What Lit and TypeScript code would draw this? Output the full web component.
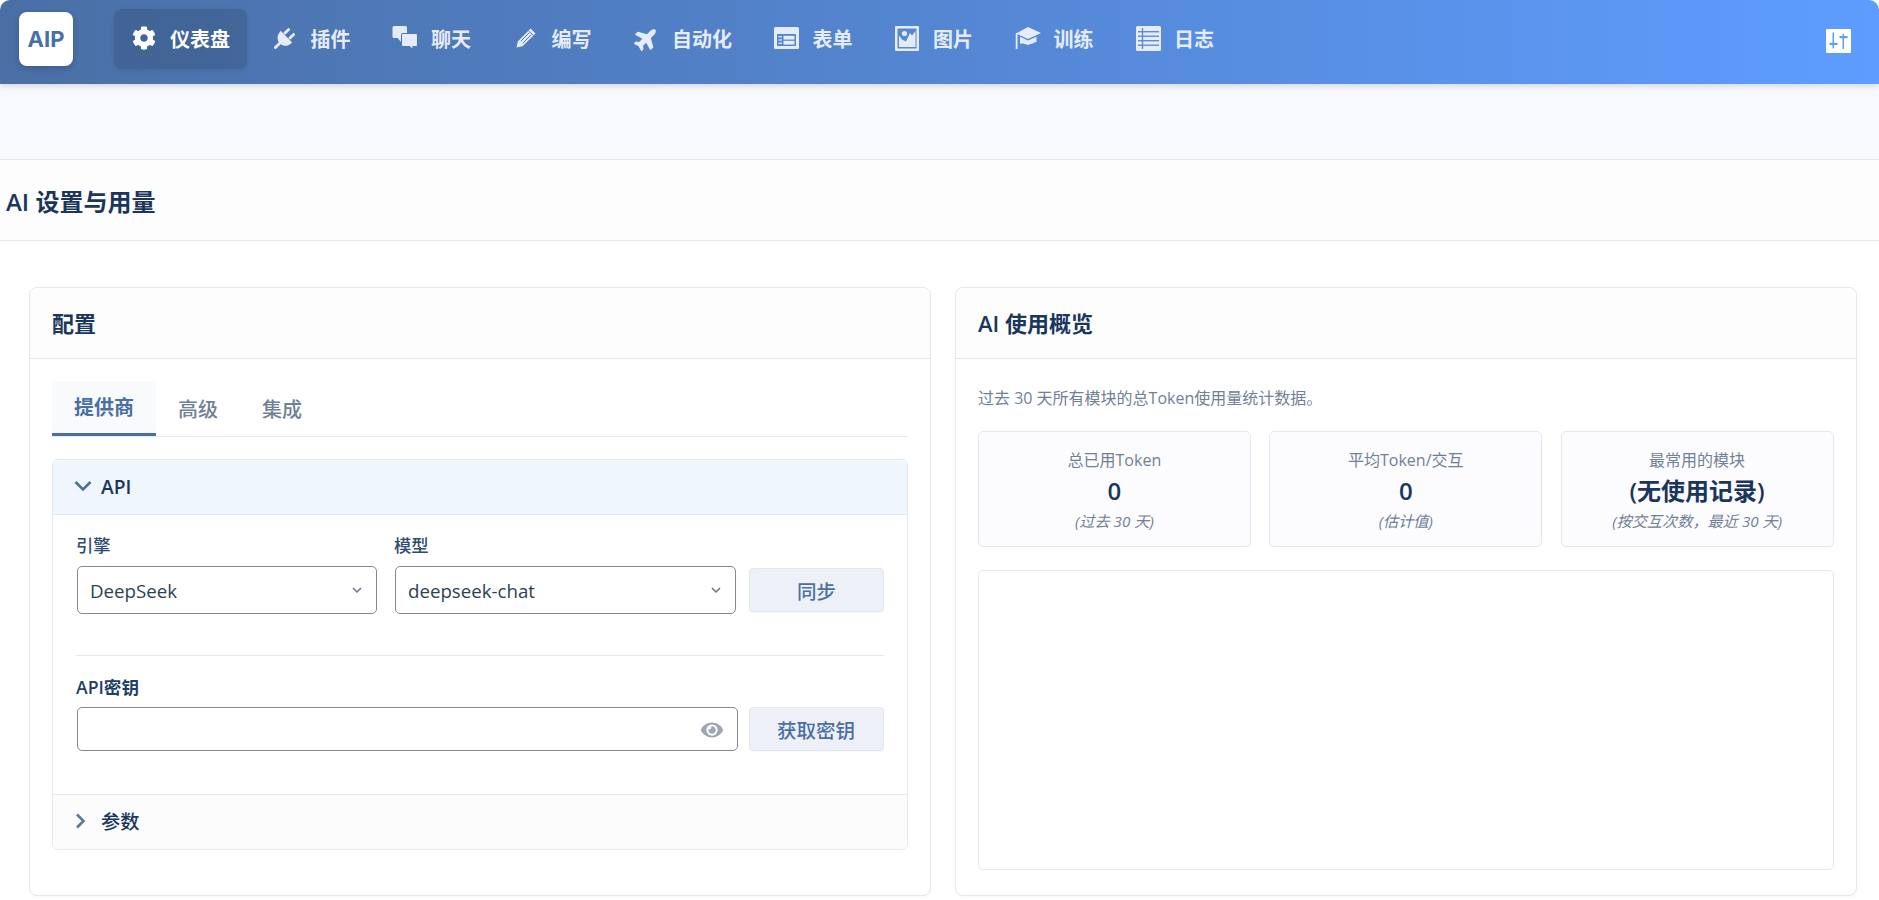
import { LitElement, html, css } from "lit";
import { customElement } from "lit/decorators.js";

const ICONS: Record<string, unknown> = {
  gear: html`<svg width="24" height="24" viewBox="0 0 512 512" fill="currentColor"><path d="M487.4 315.7l-42.6-24.6c4.3-23.2 4.3-47 0-70.2l42.6-24.6c4.9-2.8 7.1-8.6 5.5-14-11.1-35.6-30-67.8-54.7-94.6-3.8-4.1-10-5.1-14.8-2.3L380.8 110c-17.9-15.4-38.5-27.3-60.8-35.1V25.8c0-5.6-3.9-10.5-9.4-11.7-36.7-8.2-74.3-7.8-109.2 0-5.5 1.2-9.4 6.1-9.4 11.7V75c-22.2 7.9-42.8 19.8-60.8 35.1L88.7 85.5c-4.9-2.8-11-1.9-14.8 2.3-24.7 26.7-43.6 58.9-54.7 94.6-1.7 5.4.6 11.2 5.5 14L67.3 221c-4.3 23.2-4.3 47 0 70.2l-42.6 24.6c-4.9 2.8-7.1 8.6-5.5 14 11.1 35.6 30 67.8 54.7 94.6 3.8 4.1 10 5.1 14.8 2.3l42.6-24.6c17.9 15.4 38.5 27.3 60.8 35.1v49.2c0 5.6 3.9 10.5 9.4 11.7 36.7 8.2 74.3 7.8 109.2 0 5.5-1.2 9.4-6.1 9.4-11.7v-49.2c22.2-7.9 42.8-19.8 60.8-35.1l42.6 24.6c4.9 2.8 11 1.9 14.8-2.3 24.7-26.7 43.6-58.9 54.7-94.6 1.5-5.5-.7-11.3-5.6-14.1zM256 336c-44.1 0-80-35.9-80-80s35.9-80 80-80 80 35.9 80 80-35.9 80-80 80z"/></svg>`,
  plug: html`<svg width="22" height="22" viewBox="0 0 22 22" fill="currentColor"><path d="M6.6 3.8 18.2 15.400 16.400 17C13.500 19.500 9 19.500 6 16.500 3 13.500 2.800 9.300 5.200 6Z"/><path d="M11 6l3.600-3.600M16 11l3.600-3.600M1.400 20.600 6 16" fill="none" stroke="currentColor" stroke-width="2.800" stroke-linecap="round"/></svg>`,
  comments: html`<svg width="26" height="24" viewBox="0 0 26 24" fill="currentColor"><path d="M2 0h11.500a1.500 1.500 0 0 1 1.500 1.500v9a1.500 1.500 0 0 1-1.500 1.500H9.500v4.500L5.500 12H2a1.500 1.500 0 0 1-1.500-1.500v-9A1.500 1.500 0 0 1 2 0z"/><path d="M11.500 7.500h12.500a1.500 1.500 0 0 1 1.500 1.500v10a1.500 1.500 0 0 1-1.500 1.500h-3v3.500l-3.500-3.500h-6.500a1.500 1.500 0 0 1-1.500-1.500V9a1.500 1.500 0 0 1 1.500-1.500z" stroke="#5079ba" stroke-width="1.100"/></svg>`,
  pencil: html`<svg width="20" height="20" viewBox="0 0 20 20" fill="currentColor"><path d="M14.500.5 19.500 5.500 6.500 18.200.5 19.500 1.800 13.500Z"/><path d="M4.800 13.200 13.400 4.600M6.800 15.200 15.400 6.600" fill="none" stroke="#5079ba" stroke-width="1"/><path d="M12.400 2.600l5 5" fill="none" stroke="#5079ba" stroke-width="1"/></svg>`,
  plane: html`<svg width="25" height="25" viewBox="0 0 576 576" fill="currentColor"><g transform="rotate(-45 288 288) translate(0 32)"><path d="M480 192H365.710L260.610 8.060A16.014 16.014 0 0 0 246.710 0h-65.500c-10.630 0-18.300 10.170-15.380 20.390L214.860 192H112l-43.200-57.600c-3.020-4.030-7.770-6.400-12.800-6.400H16.010C5.600 128-2.040 137.780.490 147.880L32 256 .490 364.120C-2.040 374.220 5.600 384 16.010 384H56c5.040 0 9.780-2.370 12.800-6.400L112 320h102.860l-49.030 171.600c-2.920 10.220 4.750 20.400 15.380 20.400h65.500c5.740 0 11.040-3.080 13.890-8.060L365.710 320H480c35.350 0 96-28.650 96-64s-60.650-64-96-64z"/></g></svg>`,
  form: html`<svg width="25" height="22" viewBox="0 0 25 22"><rect width="25" height="22" rx="1.500" fill="currentColor"/><rect x="3" y="7" width="19" height="12" fill="#5485d0"/><g fill="currentColor"><rect x="4.500" y="9" width="3.500" height="1.300"/><rect x="4.500" y="12.300" width="3.500" height="1.300"/><rect x="4.500" y="15.600" width="3.500" height="1.300"/><rect x="9.500" y="8.800" width="11" height="3.800"/><rect x="9.500" y="13.800" width="11" height="3.800"/></g></svg>`,
  image: html`<svg width="24" height="25" viewBox="0 0 24 25"><rect width="24" height="25" rx="1" fill="currentColor"/><rect x="2.500" y="2.500" width="19" height="20" fill="#5688d4"/><path d="M4 21V9.500l3 4 4 2 4-8.500 2 2.500 3.500-4.500V21z" fill="currentColor"/><circle cx="9.500" cy="7.500" r="2.600" fill="currentColor"/></svg>`,
  cap: html`<svg width="26" height="22" viewBox="0 0 26 22" fill="currentColor"><path d="M13 0 26 6 13 12 .8 6.500Z"/><path d="M5 9.800 13 13.600 21.500 9.800V14.800C18 16.500 15.500 17.200 13 18 10.500 16.800 8 16.200 5 16.500Z"/><path d="M.7 6.500h1.800V22H.7z"/></svg>`,
  list: html`<svg width="25" height="25" viewBox="0 0 25 25"><rect width="25" height="25" rx="1.500" fill="currentColor"/><g fill="#5a8cd8"><rect x="2" y="5" width="21" height="1.400"/><rect x="2" y="9.500" width="21" height="1.400"/><rect x="2" y="14" width="21" height="1.400"/><rect x="2" y="18.500" width="21" height="1.400"/><rect x="5.800" y="2" width="1.400" height="21"/></g></svg>`,
};

const NAV = [
  ["gear", "仪表盘"],
  ["plug", "插件"],
  ["comments", "聊天"],
  ["pencil", "编写"],
  ["plane", "自动化"],
  ["form", "表单"],
  ["image", "图片"],
  ["cap", "训练"],
  ["list", "日志"],
];

const STATS = [
  ["总已用Token", "0", "(过去 30 天)"],
  ["平均Token/交互", "0", "(估计值)"],
  ["最常用的模块", "(无使用记录)", "(按交互次数，最近 30 天)"],
];

const chevronSmall = html`<svg class="sel-chev" width="10" height="7" viewBox="0 0 10 7" fill="none" stroke="#6b7280" stroke-width="1.500"><path d="M1 1l4 4 4-4"/></svg>`;

@customElement("app-root")
export class AppRoot extends LitElement {
  static styles = css`
    :host {
      display: block;
      height: 900px;
      overflow: hidden;
      background: #fff;
      font-family: "Open Sans", "Noto Sans CJK SC", sans-serif;
      color: #1a365d;
    }
    .win { height: 900px; border-radius: 10px; overflow: hidden; background: #fff; }
    .top {
      height: 84px;
      box-sizing: border-box;
      display: flex;
      align-items: flex-start;
      padding: 9px 28px 0 19px;
      background: linear-gradient(90deg, #4a6fa5, #5e9dff);
      box-shadow: 0 2px 6px rgba(0, 0, 0, 0.15);
      position: relative;
    }
    .logo {
      width: 54px;
      height: 54px;
      margin-top: 3px;
      margin-right: 41px;
      border-radius: 8px;
      background: #fff;
      color: #4a6fa5;
      display: flex;
      align-items: center;
      justify-content: center;
      font-family: Inter, sans-serif;
      font-size: 22px;
      font-weight: 700;
      box-shadow: 0 2px 6px rgba(0, 0, 0, 0.2);
    }
    nav { display: flex; flex: 1; gap: 7.500px; }
    .item {
      height: 60px;
      display: flex;
      align-items: center;
      gap: 12px;
      padding: 0 17px 2px 16px;
      border-radius: 8px;
      box-sizing: border-box;
      color: #e6ecf7;
      font-size: 20px;
      font-weight: 600;
    }
    .item.on {
      background: rgba(0, 0, 0, 0.12);
      color: #fff;
      box-shadow: 0 1px 4px rgba(0, 0, 0, 0.1);
    }
    .ico { width: 28px; display: flex; justify-content: center; }
    .sliders { margin-top: 20px; width: 25px; height: 24px; display: block; }

    .strip { height: 75px; background: #f8f9fc; }
    .head {
      height: 82px;
      box-sizing: border-box;
      padding: 0 6px;
      display: flex;
      align-items: center;
      background: #fdfdfe;
      border-top: 1px solid #e2e8f0;
      border-bottom: 1px solid #e2e8f0;
      font-size: 24px;
      font-weight: 600;
      color: #1a365d;
    }
    .grid {
      display: grid;
      grid-template-columns: 1fr 1fr;
      gap: 24.500px;
      padding: 46px 22.500px 0 29px;
    }
    .card {
      height: 609px;
      box-sizing: border-box;
      border: 1px solid #e2e8f0;
      border-radius: 8px;
      background: #fff;
      overflow: hidden;
      box-shadow: 0 1px 3px rgba(0, 0, 0, 0.03);
    }
    .card-head {
      height: 71px;
      box-sizing: border-box;
      padding: 0 22px 3px;
      display: flex;
      align-items: center;
      background: #fdfdfe;
      border-bottom: 1px solid #e2e8f0;
      font-size: 22px;
      font-weight: 600;
    }
    .card-body { padding: 22px; }

    .tabs { display: flex; height: 56px; box-sizing: border-box; border-bottom: 1px solid #e2e8f0; margin: 0 0 22px; }
    .tab {
      height: 55px;
      box-sizing: border-box;
      padding: 0 22px 1px;
      display: flex;
      align-items: center;
      font-size: 20px;
      font-weight: 500;
      color: #718096;
    }
    .tab.on { font-weight: 600; color: #4a6fa5; background: #f9fafc; border-bottom: 3px solid #4a6fa5; }

    .acc { border: 1px solid #e2e8f0; border-radius: 6px; overflow: hidden; }
    .acc-head {
      height: 55px;
      box-sizing: border-box;
      display: flex;
      align-items: center;
      padding: 0 0 2px 21px;
      gap: 9px;
      font-size: 19.200px;
      font-weight: 600;
      background: #f0f6fe;
      border-bottom: 1px solid #e2e8f0;
    }
    .acc-head svg { width: 18px; flex: none; }
    .acc-head.closed { background: #fcfcfd; border-bottom: 0; border-top: 1px solid #e2e8f0; font-weight: 500; }
    .acc-body { padding: 21px 23px 0; height: 279px; box-sizing: border-box; }
    label { display: block; height: 20px; line-height: 20px; margin-bottom: 10px; font-size: 17.300px; font-weight: 500; color: #2d4a6f; }
    label.strong { font-size: 17.600px; font-weight: 600; color: #1f3f68; }
    .row1 { display: grid; grid-template-columns: 301px 342px 135px; column-gap: 17px; }
    .row1 .btn-cell { display: flex; align-items: flex-end; padding-bottom: 2px; margin-left: -4px; }
    .select {
      height: 48px;
      margin-left: 1px;
      box-sizing: border-box;
      border: 1px solid #85888f;
      border-radius: 5px;
      padding: 0 12px;
      display: flex;
      align-items: center;
      justify-content: space-between;
      font-size: 18.700px;
      color: #2d3f55;
      background: #fff;
    }
    .sel-chev { flex: none; margin-right: 2px; }
    .btn {
      width: 135px;
      height: 44px;
      box-sizing: border-box;
      border: 1px solid #e2e8f0;
      border-radius: 4px;
      background: #edf1f7;
      color: #4a6fa5;
      font-size: 19.500px;
      font-weight: 500;
      font-family: inherit;
      display: flex;
      align-items: center;
      justify-content: center;
      box-shadow: 0 1px 2px rgba(0, 0, 0, 0.04);
    }
    .rule { height: 1px; background: #e2e8f0; margin: 41px 0 21px; }
    .row2 { display: flex; gap: 10.500px; align-items: stretch; }
    .input {
      flex: 1;
      margin-left: 1px;
      height: 44px;
      box-sizing: border-box;
      border: 1px solid #85888f;
      border-radius: 5px;
      position: relative;
    }
    .eye { position: absolute; right: 13px; top: 12px; }

    .desc { font-size: 16px; color: #718096; line-height: 24px; margin: 5px 0 21px; }
    .stats { display: grid; grid-template-columns: repeat(3, 1fr); gap: 18.600px; }
    .stat {
      height: 116px;
      box-sizing: border-box;
      border: 1px solid #e2e8f0;
      border-radius: 5px;
      background: #fcfcfe;
      text-align: center;
      padding-top: 17px;
      box-shadow: 0 1px 2px rgba(0, 0, 0, 0.02);
    }
    .s-label { font-size: 16px; line-height: 22px; color: #718096; }
    .s-value { font-size: 24px; font-weight: 600; line-height: 34px; margin-top: 3px; color: #1a365d; }
    .s-sub { font-size: 15.200px; line-height: 20px; font-style: italic; color: #718096; margin-top: 3px; }
    .chart { height: 300px; box-sizing: border-box; margin-top: 22.500px; border: 1px solid #e2e8f0; border-radius: 5px; background: #fff; }
  `;

  render() {
    return html`<div class="win">
      <header class="top">
        <div class="logo">AIP</div>
        <nav>
          ${NAV.map(
            ([ic, t], i) => html`<div class="item ${i === 0 ? "on" : ""}">
              <span class="ico">${ICONS[ic]}</span><span>${t}</span>
            </div>`
          )}
        </nav>
        <svg class="sliders" viewBox="0 0 25 24">
          <rect width="25" height="24" rx="1" fill="#fff"/>
          <g fill="#5e9dff">
            <rect x="6.500" y="3.500" width="1.500" height="16"/>
            <rect x="3.500" y="13.800" width="8" height="2.200"/>
            <rect x="16.500" y="5" width="1.500" height="15"/>
            <rect x="13.500" y="7" width="8" height="2.200"/>
          </g>
        </svg>
      </header>
      <div class="strip"></div>
      <div class="head">AI 设置与用量</div>
      <div class="grid">
        <section class="card">
          <div class="card-head">配置</div>
          <div class="card-body">
            <div class="tabs">
              <div class="tab on">提供商</div>
              <div class="tab">高级</div>
              <div class="tab">集成</div>
            </div>
            <div class="acc">
              <div class="acc-head">
                <svg width="18" height="12" viewBox="0 0 18 12" fill="none" stroke="#4a6fa5" stroke-width="2.600"><path d="M1.500 2l7.500 7.500L16.500 2"/></svg>
                API
              </div>
              <div class="acc-body">
                <div class="row1">
                  <div>
                    <label>引擎</label>
                    <div class="select">DeepSeek ${chevronSmall}</div>
                  </div>
                  <div>
                    <label>模型</label>
                    <div class="select">deepseek-chat ${chevronSmall}</div>
                  </div>
                  <div class="btn-cell"><div class="btn">同步</div></div>
                </div>
                <div class="rule"></div>
                <label class="strong">API密钥</label>
                <div class="row2">
                  <div class="input">
                    <svg class="eye" width="24" height="20" viewBox="0 0 576 512" fill="#a0a5b5"><path d="M572.520 241.400C518.290 135.590 410.930 64 288 64S57.680 135.640 3.480 241.410a32.350 32.350 0 0 0 0 29.190C57.710 376.410 165.070 448 288 448s230.320-71.640 284.520-177.410a32.350 32.350 0 0 0 0-29.190zM288 400a144 144 0 1 1 144-144 143.930 143.930 0 0 1-144 144zm0-240a95.310 95.310 0 0 0-25.310 3.790 47.850 47.850 0 0 1-66.900 66.900A95.780 95.780 0 1 0 288 160z"/></svg>
                  </div>
                  <div class="btn">获取密钥</div>
                </div>
              </div>
              <div class="acc-head closed">
                <svg width="18" height="16" viewBox="0 0 18 16" fill="none" stroke="#5f7898" stroke-width="2.600"><path d="M3 1.500l6.500 6.500L3 14.500"/></svg>
                参数
              </div>
            </div>
          </div>
        </section>
        <section class="card">
          <div class="card-head">AI 使用概览</div>
          <div class="card-body">
            <div class="desc">过去 30 天所有模块的总Token使用量统计数据。</div>
            <div class="stats">
              ${STATS.map(
                ([l, v, s]) => html`<div class="stat">
                  <div class="s-label">${l}</div>
                  <div class="s-value">${v}</div>
                  <div class="s-sub">${s}</div>
                </div>`
              )}
            </div>
            <div class="chart"></div>
          </div>
        </section>
      </div>
    </div>`;
  }
}
